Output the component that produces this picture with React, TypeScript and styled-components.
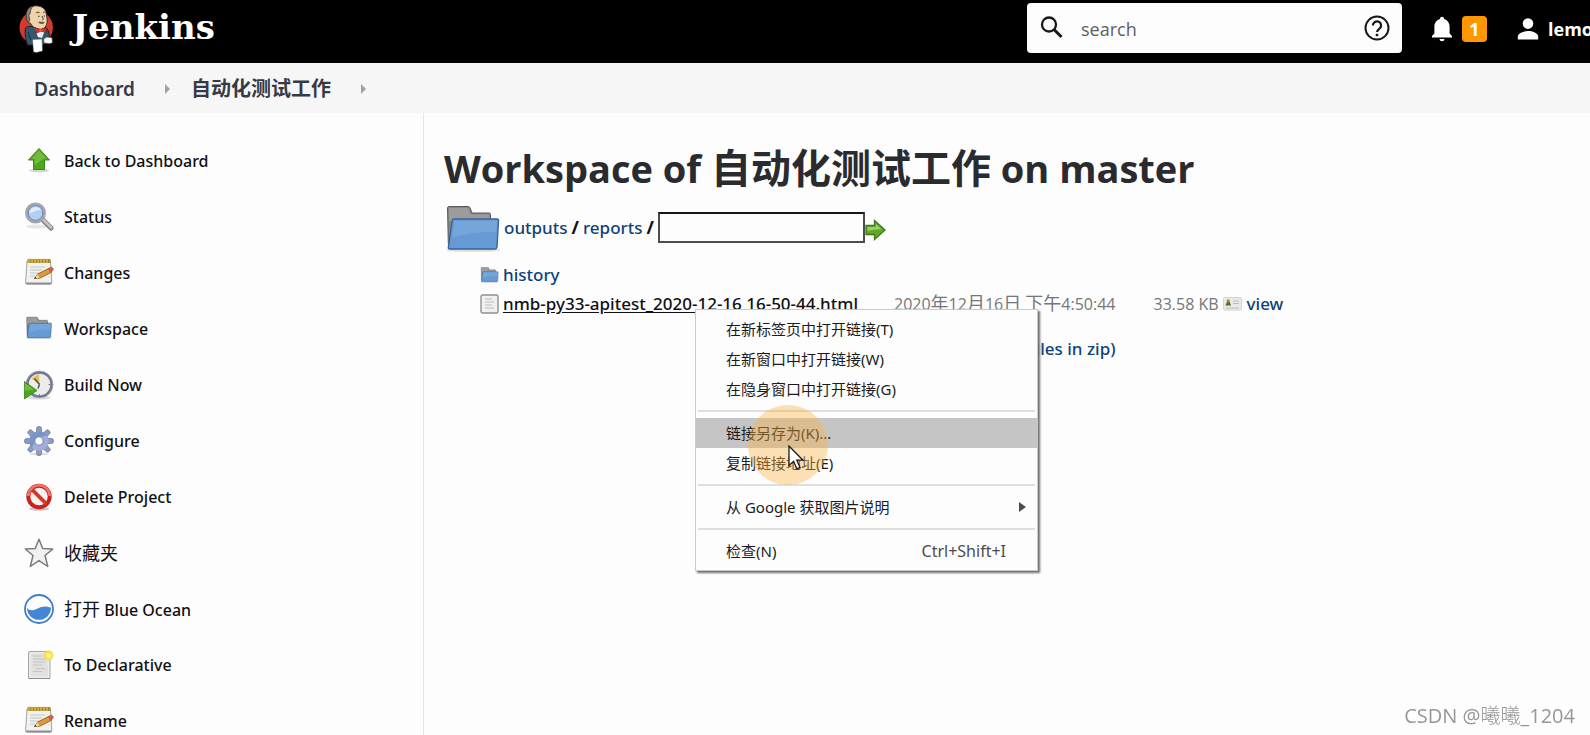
import React from 'react';
import styled, { createGlobalStyle } from 'styled-components';

const latin = `"Noto Sans", "Noto Sans CJK SC", sans-serif`;
const latinOpen = `"Open Sans", "Noto Sans CJK SC", sans-serif`;

const GlobalStyle = createGlobalStyle`
  *, *::before, *::after { box-sizing: border-box; }
  body {
    margin: 0;
    overflow: hidden;
    background: #fdfdfd;
    color: #101014;
    font-family: ${latin};
    font-size: 17px;
  }
  a { color: inherit; text-decoration: none; }
  svg { display: block; flex: none; }
`;

const Page = styled.div`
  display: flex;
  flex-direction: column;
  min-height: 100vh;
`;

/* ---------- header ---------- */

const Header = styled.header`
  display: flex;
  align-items: flex-start;
  height: 63px;
  padding-left: 19px;
  background: #000;
  color: #fff;
  overflow: hidden;
`;

const Brand = styled.a`
  display: flex;
  gap: 18px;
  margin-right: auto;
  padding-top: 5px;
`;

const BrandName = styled.span`
  font: 700 34px/44px "DejaVu Serif", serif;
`;

const SearchBox = styled.form`
  display: flex;
  align-items: center;
  width: 375px;
  height: 50px;
  margin: 3px 29px 0 0;
  padding: 0 12px;
  gap: 16px;
  border-radius: 4px;
  background: #fdfdfd;
  color: #18181a;
`;

const SearchInput = styled.input`
  flex: 1;
  min-width: 0;
  padding: 2px 0 0;
  border: 0;
  outline: 0;
  background: transparent;
  color: #333;
  font: 400 18px/26px ${latinOpen};
  &::placeholder { color: #5c5e62; opacity: 1; }
`;

const HeaderLink = styled.a<{ $width: number }>`
  display: flex;
  flex: none;
  align-items: center;
  gap: 9px;
  width: ${p => p.$width}px;
  height: 58px;
  font: 700 18px/26px ${latinOpen};
`;

const Badge = styled.span`
  width: 25px;
  height: 26px;
  border-radius: 4px;
  background: #ff9800;
  font-size: 18px;
  line-height: 26px;
  text-align: center;
`;

/* ---------- breadcrumbs ---------- */

const Breadcrumbs = styled.nav`
  display: flex;
  align-items: center;
  height: 50px;
  padding: 2px 0 0 34px;
  background: #f6f6f6;
  color: #363a45;
  line-height: 28px;
`;

const Crumb = styled.a<{ $cjk?: boolean }>`
  font-size: ${p => (p.$cjk ? 20 : 19)}px;
  font-weight: ${p => (p.$cjk ? 700 : 600)};
`;

const CrumbArrow = styled.span`
  margin: 0 21px 0 30px;
  border: 5px solid transparent;
  border-left-color: #a2a2a2;
  border-right-width: 0;
`;

/* ---------- body ---------- */

const Columns = styled.div`
  display: flex;
  flex: 1;
`;

const Sidebar = styled.nav`
  display: flex;
  flex: none;
  flex-direction: column;
  gap: 26px;
  width: 424px;
  padding: 33px 0 0 24px;
  border-right: 1px solid #e6e6e6;
`;

const Task = styled.a`
  display: flex;
  align-items: center;
  gap: 10px;
  height: 30px;
  font-size: 16px;
  font-weight: 500;
  line-height: 30px;
`;

const TaskCjk = styled.span`
  font-size: 18px;
  font-weight: 400;
`;

const Main = styled.main`
  position: relative;
  flex: 1;
  min-width: 0;
  padding: 30px 20px 0;
`;

const Title = styled.h1`
  margin: 0 0 10px;
  color: #2a2b2f;
  font: 700 38px/50px ${latinOpen};
  white-space: nowrap;
`;

const TitleCjk = styled.span`
  font-size: 40px;
`;

const PathForm = styled.form`
  display: flex;
  align-items: center;
  height: 48px;
  margin-bottom: 10px;
`;

const FolderBox = styled.span`
  padding-top: 4px;
`;

const Link = styled.a`
  color: #0e4279;
  font-weight: 500;
`;

const Slash = styled.span`
  margin: 0 4px;
  font-size: 18px;
  font-weight: 700;
`;

const PatternInput = styled.input`
  width: 207px;
  height: 31px;
  border: 2px solid #4c4c4c;
  border-top-color: #161616;
  border-radius: 0;
  background: #fdfdfd;
  font: 400 16px/24px ${latin};
`;

const IconButton = styled.button`
  padding: 5px 0 0;
  border: 0;
  background: none;
`;

const Files = styled.table`
  margin-left: 36px;
  border-collapse: collapse;
  line-height: 28px;
  white-space: nowrap;
`;

const Cell = styled.td<{ $gap?: number }>`
  height: 28px;
  padding: 0 0 0 ${p => p.$gap ?? 0}px;
  color: #75767a;
  font-family: ${latinOpen};
  font-size: 16px;
`;

const NameCell = styled(Cell)`
  font-family: ${latin};
  font-size: 17px;
`;

const FileLink = styled(Link)`
  color: #101014;
  text-decoration: underline;
  text-underline-offset: 2px;
`;

const DateCjk = styled.span`
  font-size: 18px;
`;

const ViewBox = styled.span`
  display: flex;
  align-items: center;
  gap: 5px;
`;

const ZipCell = styled(NameCell)`
  padding-top: 17px;
  text-align: right;
`;

/* ---------- context menu ---------- */

const Menu = styled.div`
  position: absolute;
  top: 196px;
  left: 271px;
  width: 343px;
  padding: 4px 0;
  border: 1px solid #c9c9c9;
  background: #fdfdfd;
  box-shadow: 2px 2px 2px #6e6e6e;
`;

const MenuItem = styled.button<{ $active?: boolean }>`
  display: flex;
  align-items: center;
  justify-content: space-between;
  width: 100%;
  height: 30px;
  padding: 0 31px 0 30px;
  border: 0;
  background: ${p => (p.$active ? '#c5c5c5' : 'transparent')};
  color: #1b1b1d;
  font: 400 15px/30px ${latin};
  text-align: left;
`;

const Shortcut = styled.span`
  color: #4c4c4e;
  font-size: 16px;
`;

const SubArrow = styled.span`
  margin-right: -20px;
  border: 5px solid transparent;
  border-left: 7px solid #4c4c4c;
  border-right-width: 0;
`;

const Separator = styled.hr`
  height: 2px;
  margin: 6px 2px;
  border: 0;
  background: #dedede;
`;

const PointerHalo = styled.div`
  position: absolute;
  top: 292px;
  left: 324px;
  width: 80px;
  height: 80px;
  padding: 40px 0 0 40px;
  border-radius: 50%;
  background: rgba(250, 178, 64, 0.4);
  pointer-events: none;
`;

const Watermark = styled.div`
  position: fixed;
  right: 15px;
  bottom: 5px;
  color: #96979a;
  font: 400 20px/28px ${latinOpen};
`;

const WatermarkCjk = styled.span`
  font-weight: 300;
`;

/* ---------- drawings ---------- */

const JenkinsLogo = () => (
  <svg width="35" height="48" viewBox="0 0 35 48">
    <circle cx="17.2" cy="22.5" r="16.7" fill="#d33b2f" />
    <path d="M6.500 23C8 21.500 11 21 13 21.500L22 27l6-3.500c1.800 3 2.500 6.500 2.500 9L24 40H8.500C6.500 35 5.500 28 6.500 23z" fill="#33586d" stroke="#14222b" strokeWidth="1" />
    <path d="M15 22l4 10 4 1 3-8-5-3z" fill="#f2f2f2" />
    <path d="M8 10C7.500 4 12 .8 17 .8c6.500 0 10.300 3.700 10.500 9.200.1 2.500 1.300 5 .3 8.500-.8 3.500-3 6-6.800 5.800-4-.3-8-2.300-9.500-6C8.500 18 7 14 8 10z" fill="#efd2ae" stroke="#2a211c" strokeWidth=".9" />
    <path d="M7.300 12C6.800 5 10 1.500 14 1.200c-2 2-2.800 4.500-2.800 7L9.800 10.500l1 4.300-1.300 2.800C8.300 16.500 7.300 14.500 7.300 12z" fill="#8d867e" stroke="#2a211c" strokeWidth=".7" />
    <path d="M17 8c1-1 2.500-1 3.500-.3M24 7.500c.8-.5 1.600-.4 2.400 0M19 11.300h1.500M24.800 11h1.200M23 11c.8 2 1.800 3 .6 4.200" fill="none" stroke="#3a2a20" strokeWidth="1" />
    <path d="M19 17.500c1.500-1.500 3-1 3.800-.6 1 0 2-.3 2.700.8-1.700 1.800-4.500 1.500-6.500-.2z" fill="#705544" />
    <path d="M16 22.500l5.200 2.200 5.600-2.400.9 5-5.700-1-5.400 2z" fill="#d83329" stroke="#5e1712" strokeWidth=".6" />
    <circle cx="21.500" cy="25.500" r="1.500" fill="#ef5347" />
    <path d="M13.500 34.500l9.500-.5.500 12-6 1.500-3-.6z" fill="#fff" stroke="#555" strokeWidth=".5" />
    <path d="M24.500 34l3-2 5.500.5.500 5.300-3 .9-5.500-.7z" fill="#f6f6f6" stroke="#333" strokeWidth=".6" />
    <path d="M9.500 27c.2 3 .9 5.500 2.500 8" stroke="#14222b" fill="none" strokeWidth=".8" />
  </svg>
);

const SearchIcon = () => (
  <svg width="26" height="26" viewBox="0 0 26 26" fill="none" stroke="currentColor" strokeWidth="2.300">
    <circle cx="10" cy="9.500" r="7" />
    <path d="M15 14.500l7.500 7.500" strokeWidth="3" />
  </svg>
);

const HelpIcon = () => (
  <svg width="26" height="26" viewBox="0 0 26 26" fill="none" stroke="currentColor">
    <circle cx="13" cy="13" r="11.500" strokeWidth="2" />
    <path d="M8.900 10.500a4.100 4.100 0 1 1 6.300 3.400c-1.400 1-2.100 1.600-2.100 3.100" strokeWidth="2.200" />
    <path d="M13 18.800v2.400" strokeWidth="2.500" />
  </svg>
);

const BellIcon = () => (
  <svg width="22" height="26" viewBox="0 0 22 26" fill="#fff">
    <path d="M11 .8c1.200 0 2 .9 2 2.100 3.500 1 5.600 4 5.600 7.600v7l2.400 2.600v1.400H1v-1.400l2.400-2.600v-7C3.400 6.900 5.500 3.900 9 2.900 9 1.700 9.800.8 11 .8z" />
    <path d="M8.500 23h5a2.500 2.200 0 0 1-5 0z" />
  </svg>
);

const PersonIcon = () => (
  <svg width="22" height="22" viewBox="0 0 22 22" fill="#fff">
    <circle cx="11" cy="5.600" r="5.300" />
    <path d="M.8 21.500v-2.800c0-3.600 6-5.600 10.200-5.600s10.200 2 10.200 5.600v2.800z" />
  </svg>
);

const Svg30: React.FC<{ children: React.ReactNode }> = ({ children }) => (
  <svg width="30" height="30" viewBox="0 0 30 30">{children}</svg>
);

const UpArrow = () => (
  <Svg30>
    <ellipse cx="15" cy="24.500" rx="10" ry="1.800" fill="#d5d5d5" />
    <path d="M15 2.500L25.500 14H20.500v9.500h-11V14H4.500z" fill="#4fa51c" stroke="#3c8417" />
    <path d="M15 4.200L22.500 12.800h-3.200L10.700 19v-6.200H7z" fill="#86c850" opacity=".65" />
  </Svg30>
);

const Magnifier = () => (
  <Svg30>
    <ellipse cx="13" cy="24.500" rx="11" ry="2" fill="#e6e6e6" />
    <path d="M18.500 17.500l8.500 8.500" stroke="#7f7f7f" strokeWidth="5" strokeLinecap="round" />
    <path d="M19 17.500l8 8" stroke="#c6c6c6" strokeWidth="2.600" strokeLinecap="round" />
    <circle cx="11.500" cy="11" r="9" fill="#b9d3f3" stroke="#a3a5ab" strokeWidth="3" />
    <circle cx="11.500" cy="11" r="7.300" fill="#b3cff2" stroke="#6286bd" strokeWidth="1" />
    <path d="M5.500 11.500C5.500 7 9 5 12 5c2.500 0 4.500 1.300 5.300 3-3.300.2-8 1.500-11.800 3.500z" fill="#dfecfb" />
  </Svg30>
);

const Notepad = () => (
  <Svg30>
    <path d="M3 3h23.500l1.300 21.500c0 1-.5 1.500-1.500 1.500H3c-1 0-1.500-.6-1.400-1.500z" fill="#f1f1f0" stroke="#a2a2a0" />
    <path d="M1.500 24.500c0 1.500 1 2 2 2h22.500c1.200 0 1.800-.5 1.800-2z" fill="#8f8f8d" />
    <path d="M3.500 1h23v4h-23z" fill="#a8862a" />
    <path d="M5 .5v4.500M8 .5v4.500M11 .5v4.500M14 .5v4.500M17 .5v4.500M20 .5v4.500M23 .5v4.500" stroke="#dcc067" strokeWidth="1.200" />
    <path d="M6 9h15M6 12h12M6 15h9M6 18h5" stroke="#c4c4c4" strokeWidth="1" />
    <path d="M10.500 20.500l3-4.300L25 10.300l2.300 4L15.500 20.300z" fill="#e09b36" stroke="#91591a" strokeWidth=".9" />
    <path d="M24.500 10.500l2.300-1.200c1.800-.5 3.200 2.200 1.800 3.400l-1.900 1.400z" fill="#d9604c" stroke="#8f4537" strokeWidth=".6" />
    <path d="M10.500 20.500l3-4.300 2 4.100z" fill="#eed7ae" />
    <path d="M10 20.800l1.500-2 .9 1.600z" fill="#333" />
  </Svg30>
);

const Folder: React.FC<{ width: number; height: number }> = ({ width, height }) => (
  <svg width={width} height={height} viewBox="0 0 60 48">
    <ellipse cx="29" cy="45" rx="27" ry="2" fill="#dcdcdc" />
    <path d="M3.500 3c0-1 .6-1.500 1.500-1.500h19c1 0 1.500.4 2 1.300L28 8h17c1 0 1.500.5 1.500 1.500V40H6c-1.200 0-1.700-.7-1.700-1.800z" fill="#868684" stroke="#5b5b5a" />
    <path d="M5 3h19l2.300 6.500H45V16H5z" fill="#9c9c9a" />
    <path d="M10 14h43c1.200 0 1.700.5 1.500 1.800L53 42c-.2 1.300-.8 2-2 2H6c-1.300 0-1.800-.6-1.600-2L8.200 15.700C8.400 14.500 8.900 14 10 14z" fill="#659ad4" stroke="#35649f" strokeWidth="1.400" />
    <path d="M10.500 15.500H53l-.7 12C38 26 23 29 8.300 32.500z" fill="#87b0de" opacity=".5" />
  </svg>
);

const WorkspaceFolder = () => (
  <Svg30>
    <svg x="1" y="2" width="29" height="24"><Folder width={29} height={24} /></svg>
  </Svg30>
);

const BuildClock = () => (
  <Svg30>
    <ellipse cx="15" cy="27.500" rx="12" ry="2" fill="#dcdcdc" />
    <circle cx="15.500" cy="14.500" r="12.200" fill="#ececea" stroke="#72758f" strokeWidth="2.800" />
    <circle cx="15.500" cy="14.500" r="13.500" fill="none" stroke="#a9abc0" strokeWidth=".8" />
    <path d="M15.500 14.500L7.500 8.500 15 3.700z" fill="#e5bd55" />
    <path d="M10.500 8.500l5 6M15.500 14.500l-1.500 4" stroke="#4b4b4b" strokeWidth="1.400" fill="none" />
    <path d="M24.500 14.500h1.500M15.500 24v1.500" stroke="#777" />
    <path d="M.4 11.500L13 20.500.4 29z" fill="#4da61f" stroke="#347d13" strokeWidth=".8" />
    <path d="M.8 13l9 6.500-9 1.500z" fill="#7cc64c" opacity=".7" />
  </Svg30>
);

const Gear = () => (
  <Svg30>
    <ellipse cx="15" cy="28" rx="10" ry="1.500" fill="#dedede" />
    <g fill="#8a9bc6" stroke="#62719c" strokeWidth=".7">
      {[0, 45, 90, 135, 180, 225, 270, 315].map(a => (
        <path key={a} d="M12.300 7l.5-5.700c.8-1 3.600-1 4.400 0L17.700 7z" transform={`rotate(${a} 15 15)`} />
      ))}
    </g>
    <circle cx="15" cy="15" r="9.800" fill="#a3addb" />
    <path d="M5.500 13A9.800 9.800 0 0 1 23 9.500C16 10 10 15 8 22a9.800 9.800 0 0 1-2.500-9z" fill="#6f8dc1" opacity=".8" />
    <circle cx="15" cy="15" r="4.200" fill="#fdfdfd" stroke="#7483ac" strokeWidth="1" />
  </Svg30>
);

const Prohibit = () => (
  <Svg30>
    <ellipse cx="15" cy="27" rx="10" ry="1.800" fill="#c9c9c9" />
    <circle cx="15" cy="14.500" r="10.700" fill="#f6f2f1" stroke="#c8231b" strokeWidth="4" />
    <path d="M7.500 7l15 15" stroke="#d63329" strokeWidth="3.800" />
    <path d="M4.300 14a10.700 10.700 0 0 1 21.400 0" fill="none" stroke="#ef756b" strokeWidth="2.500" />
  </Svg30>
);

const Star = () => (
  <Svg30>
    <path d="M15 1.300l3.700 9.200 10 .6-7.700 6.400 2.800 11L15 22.600 6.300 28.500l2.700-11L1.300 11l9.900-.6z" fill="#f1f1f1" stroke="#7b7b7b" strokeWidth="1.500" strokeLinejoin="round" />
  </Svg30>
);

const Ocean = () => (
  <Svg30>
    <circle cx="15" cy="15" r="14" fill="#fdfdfd" stroke="#3f7fc8" strokeWidth="1.800" />
    <path d="M3 14c2 2.400 5.500 3 9 1.300 5-2.600 8.500-4 15-1.700A12 12 0 0 1 3 14z" fill="#4286d6" />
  </Svg30>
);

const NewDocument = () => (
  <Svg30>
    <rect x="4.500" y="1.500" width="21.500" height="27" rx="1.500" fill="#ececec" stroke="#a5a5a5" />
    <rect x="6.500" y="3.500" width="17.500" height="23" fill="#e1e1e1" />
    <path d="M9 6h9M9 9h12M9 12h12M9 15h9M12 18.500h9M9 21.500h9" stroke="#c4c4c4" strokeWidth="1.200" />
    <path d="M4.500 28.500H26" stroke="#8e8e8e" />
    <circle cx="24.500" cy="5.500" r="5" fill="#f5e02c" opacity=".85" />
    <circle cx="24.500" cy="5.500" r="2.500" fill="#fdf48a" />
  </Svg30>
);

const GoArrow = () => (
  <svg width="21" height="22" viewBox="0 0 21 22">
    <path d="M1 6.500h8.500V1.500L20 11 9.500 20.500v-5H1z" fill="#5fa828" stroke="#3f7a1a" strokeWidth="1.300" />
    <path d="M2.500 8h8.300V5l6 5.500C12 10 7 11 2.500 12z" fill="#9bd069" />
  </svg>
);

const TextFile = () => (
  <svg width="19" height="20" viewBox="0 0 19 20">
    <rect x="1" y="1" width="17" height="18" rx="1.500" fill="#f0f0ef" stroke="#8f8f8d" strokeWidth="1.400" />
    <path d="M5 5h7M5 8h9M5 11h7M5 14h9" stroke="#bcbcbc" strokeWidth="1.200" />
  </svg>
);

const ViewIcon = () => (
  <svg width="19" height="16" viewBox="0 0 19 16">
    <rect x=".5" y="1.500" width="18" height="12.500" rx="1" fill="#e9e9e7" stroke="#d3d3d1" />
    <path d="M2.500 9.500l1.500-4h2.500l1.500 4z" fill="#4d6b2b" />
    <circle cx="5.200" cy="4.800" r="1.600" fill="#a6863f" />
    <path d="M10 5h6M10 7.500h6M3 12h13" stroke="#bdbdbb" />
  </svg>
);

const Cursor = () => (
  <svg width="16" height="26" viewBox="0 0 16 26">
    <path d="M1 1v19.500l4.600-4.200 3.200 7.500 3.200-1.400-3.200-7.200h6.200z" fill="#fff" stroke="#1d1d1d" strokeWidth="1.300" />
  </svg>
);

const tasks: { icon: React.ReactNode; label: React.ReactNode }[] = [
  { icon: <UpArrow />, label: 'Back to Dashboard' },
  { icon: <Magnifier />, label: 'Status' },
  { icon: <Notepad />, label: 'Changes' },
  { icon: <WorkspaceFolder />, label: 'Workspace' },
  { icon: <BuildClock />, label: 'Build Now' },
  { icon: <Gear />, label: 'Configure' },
  { icon: <Prohibit />, label: 'Delete Project' },
  { icon: <Star />, label: <TaskCjk>收藏夹</TaskCjk> },
  { icon: <Ocean />, label: <><TaskCjk>打开</TaskCjk> Blue Ocean</> },
  { icon: <NewDocument />, label: 'To Declarative' },
  { icon: <Notepad />, label: 'Rename' },
];

export default function App() {
  return (
    <Page>
      <GlobalStyle />
      <Header>
        <Brand href="#">
          <JenkinsLogo />
          <BrandName>Jenkins</BrandName>
        </Brand>
        <SearchBox role="search">
          <SearchIcon />
          <SearchInput type="text" placeholder="search" aria-label="search" />
          <a href="#" aria-label="Help"><HelpIcon /></a>
        </SearchBox>
        <HeaderLink href="#" $width={86}>
          <BellIcon />
          <Badge>1</Badge>
        </HeaderLink>
        <HeaderLink href="#" $width={73}>
          <PersonIcon />
          <span>lemo</span>
        </HeaderLink>
      </Header>

      <Breadcrumbs aria-label="Breadcrumbs">
        <Crumb href="#">Dashboard</Crumb>
        <CrumbArrow />
        <Crumb href="#" $cjk>自动化测试工作</Crumb>
        <CrumbArrow />
      </Breadcrumbs>

      <Columns>
        <Sidebar aria-label="Tasks">
          {tasks.map((task, i) => (
            <Task href="#" key={i}>
              {task.icon}
              <span>{task.label}</span>
            </Task>
          ))}
        </Sidebar>

        <Main>
          <Title>Workspace of <TitleCjk>自动化测试工作</TitleCjk> on master</Title>

          <PathForm>
            <FolderBox><Folder width={60} height={48} /></FolderBox>
            <Link href="#">outputs</Link>
            <Slash>/</Slash>
            <Link href="#">reports</Link>
            <Slash>/</Slash>
            <PatternInput type="text" aria-label="File pattern" />
            <IconButton type="button" aria-label="Go"><GoArrow /></IconButton>
          </PathForm>

          <Files>
            <tbody>
              <tr>
                <Cell><Folder width={20} height={18} /></Cell>
                <NameCell $gap={3} colSpan={4}><Link href="#">history</Link></NameCell>
              </tr>
              <tr>
                <Cell><TextFile /></Cell>
                <NameCell $gap={3}>
                  <FileLink href="#">nmb-py33-apitest_2020-12-16 16-50-44.html</FileLink>
                </NameCell>
                <Cell $gap={36}>
                  2020<DateCjk>年</DateCjk>12<DateCjk>月</DateCjk>16<DateCjk>日</DateCjk> <DateCjk>下午</DateCjk>4:50:44
                </Cell>
                <Cell $gap={38}>33.58 KB</Cell>
                <NameCell $gap={4}>
                  <ViewBox><ViewIcon /><Link href="#">view</Link></ViewBox>
                </NameCell>
              </tr>
              <tr>
                <ZipCell colSpan={3}><Link href="#">(all files in zip)</Link></ZipCell>
              </tr>
            </tbody>
          </Files>

          <Menu role="menu">
            <MenuItem role="menuitem">在新标签页中打开链接(T)</MenuItem>
            <MenuItem role="menuitem">在新窗口中打开链接(W)</MenuItem>
            <MenuItem role="menuitem">在隐身窗口中打开链接(G)</MenuItem>
            <Separator />
            <MenuItem role="menuitem" $active>链接另存为(K)...</MenuItem>
            <MenuItem role="menuitem">复制链接地址(E)</MenuItem>
            <Separator />
            <MenuItem role="menuitem">从 Google 获取图片说明<SubArrow /></MenuItem>
            <Separator />
            <MenuItem role="menuitem">检查(N)<Shortcut>Ctrl+Shift+I</Shortcut></MenuItem>
          </Menu>
          <PointerHalo><Cursor /></PointerHalo>
        </Main>
      </Columns>
      <Watermark>CSDN @<WatermarkCjk>曦曦</WatermarkCjk>_1204</Watermark>
    </Page>
  );
}
